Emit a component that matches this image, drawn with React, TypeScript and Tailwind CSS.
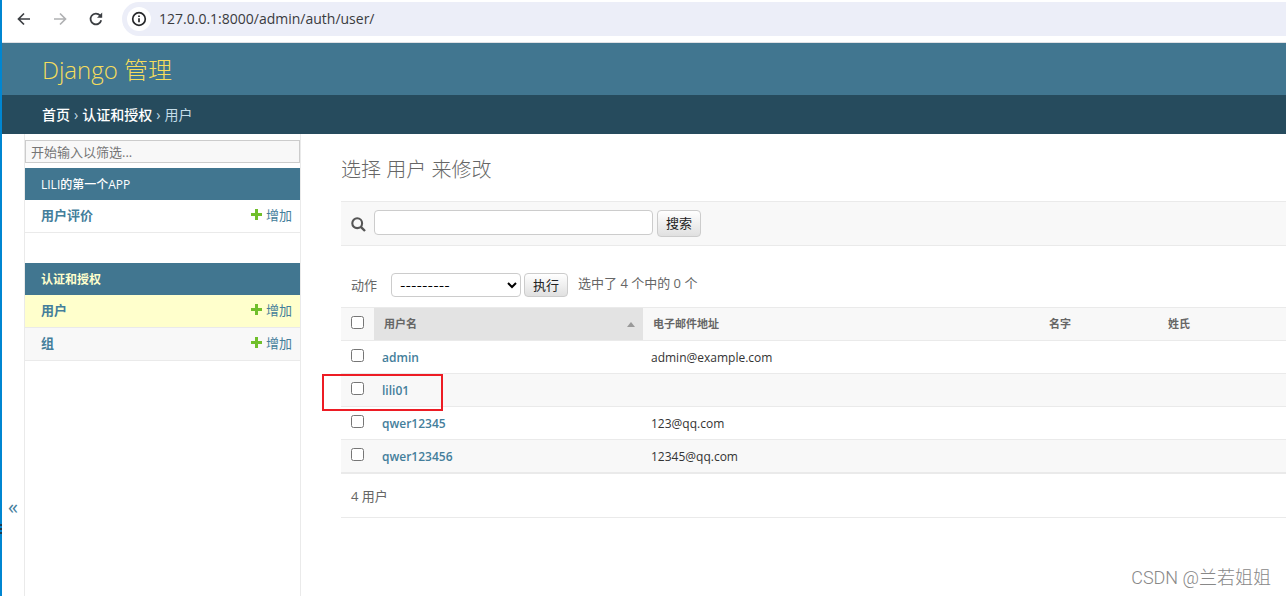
import React, { useState } from 'react';

interface User {
  username: string;
  email: string;
  marked?: boolean;
}

interface AppSection {
  label: string;
  current?: boolean;
  models: { name: string; current?: boolean; shaded?: boolean }[];
}

const users: User[] = [
  { username: 'admin', email: 'admin@example.com' },
  { username: 'lili01', email: '', marked: true },
  { username: 'qwer12345', email: '123@qq.com' },
  { username: 'qwer123456', email: '12345@qq.com' },
];

const sections: AppSection[] = [
  { label: 'LILI的第一个APP', models: [{ name: '用户评价' }] },
  {
    label: '认证和授权',
    current: true,
    models: [{ name: '用户', current: true }, { name: '组', shaded: true }],
  },
];

const buttonClass =
  'w-11 shrink-0 rounded-[4px] border border-[#ccc] bg-linear-to-b from-white to-[#e0e0e0] text-[13px] leading-none text-[#222]';
const checkboxClass = 'block size-[13px]';

function BrowserBar() {
  return (
    <div className="flex h-[43px] items-start border-b border-[#dfe1e5] bg-white">
      <div className="flex h-[38px] items-center gap-5 pr-[18px] pl-3.5 text-[#3c3f43]">
        <button type="button" aria-label="后退">
          <svg viewBox="0 0 16 16" className="size-4" fill="none" stroke="currentColor" strokeWidth="1.7">
            <path d="M14 8H3M8 2.5 2.5 8 8 13.5" />
          </svg>
        </button>
        <button type="button" aria-label="前进" className="text-[#b0b1b3]">
          <svg viewBox="0 0 16 16" className="size-4" fill="none" stroke="currentColor" strokeWidth="1.7">
            <path d="M2 8h11M8 2.5 13.5 8 8 13.5" />
          </svg>
        </button>
        <button type="button" aria-label="重新加载">
          <svg viewBox="0 0 16 16" className="size-4" fill="none" stroke="currentColor" strokeWidth="1.8">
            <path d="M13.2 9.2A5.4 5.4 0 1 1 12 4.4L13.4 6" />
            <path d="M14.2 1.6v5.2H9z" fill="currentColor" stroke="none" />
          </svg>
        </button>
      </div>
      <div className="mt-0.5 flex h-[34px] flex-1 items-center gap-2 rounded-l-full bg-[#eceef8] pl-[5px]">
        <span className="flex size-6 shrink-0 items-center justify-center rounded-full bg-white text-[#27282a]">
          <svg viewBox="0 0 16 16" className="size-4" fill="none" stroke="currentColor" strokeWidth="1.7">
            <circle cx="8" cy="8" r="6.3" />
            <path d="M8 7.2v4M8 4.4v1.6" />
          </svg>
        </span>
        <input
          aria-label="地址"
          defaultValue="127.0.0.1:8000/admin/auth/user/"
          className="min-w-0 flex-1 bg-transparent pb-0.5 text-[14px] text-[#3a3b3e] outline-none"
        />
      </div>
    </div>
  );
}

function Sidebar() {
  const [filter, setFilter] = useState('');

  return (
    <nav className="w-[277px] shrink-0 border-x border-[#eaeaea] pt-1.5">
      <input
        aria-label="筛选"
        placeholder="开始输入以筛选..."
        value={filter}
        onChange={e => setFilter(e.target.value)}
        className="mb-[5px] block h-[23px] w-full border border-[#ccc] bg-[#f8f8f8] px-[5px] text-[13px] placeholder:text-[#757575]"
      />
      {sections.map(section => (
        <section key={section.label} className="mb-[30px]">
          <h2
            className={`flex h-8 items-center bg-[#417690] px-4 pt-0.5 text-[12px] ${
              section.current ? 'font-bold text-[#ffc]' : 'font-medium text-white'
            }`}
          >
            <a href="#">{section.label}</a>
          </h2>
          {section.models
            .filter(model => model.name.includes(filter))
            .map(model => (
              <div
                key={model.name}
                className={`flex h-[33px] items-center justify-between border-b border-[#eaeaea] pr-2 pl-4 text-[13px] text-[#447e9b] ${
                  model.current ? 'bg-[#ffc]' : model.shaded ? 'bg-[#f8f8f8]' : 'bg-white'
                }`}
              >
                <a href="#" className="font-bold">{model.name}</a>
                <a href="#" className="flex items-center gap-1">
                  <svg viewBox="0 0 11 11" className="mb-1 size-[11px]" fill="#70bf2b">
                    <path d="M4 0h3v4h4v3H7v4H4V7H0V4h4z" />
                  </svg>
                  增加
                </a>
              </div>
            ))}
        </section>
      ))}
    </nav>
  );
}

function ResultsTable() {
  return (
    <table className="w-full table-fixed border-collapse text-left text-[12px]">
      <colgroup>
        <col className="w-[33px]" />
        <col className="w-[269px]" />
        <col className="w-[396px]" />
        <col className="w-[119px]" />
        <col />
      </colgroup>
      <thead>
        <tr className="h-[33px] border-y border-[#eaeaea] bg-[#f8f8f8] text-[11px] text-[#666]">
          <th className="pb-1 pl-2.5">
            <input type="checkbox" aria-label="全选" className={checkboxClass} />
          </th>
          <th className="bg-[#e3e3e3] pr-2 pl-2.5">
            <a href="#" className="flex items-center justify-between">
              用户名
              <svg viewBox="0 0 8 5" className="h-[5px] w-2" fill="#999">
                <path d="M4 0l4 5H0z" />
              </svg>
            </a>
          </th>
          <th className="pl-2.5">电子邮件地址</th>
          <th className="pl-2.5">名字</th>
          <th className="pl-2.5">姓氏</th>
        </tr>
      </thead>
      <tbody>
        {users.map(user => (
          <tr key={user.username} className="h-[33px] border-b border-[#eaeaea] even:bg-[#f8f8f8]">
            <td className="relative pb-1 pl-2.5">
              <input type="checkbox" aria-label={user.username} className={checkboxClass} />
              {user.marked && (
                <span className="pointer-events-none absolute top-0 -left-[19px] h-[37px] w-[121px] border-2 border-[#ed1c24]" />
              )}
            </td>
            <td className="pt-0.5 pl-2 font-semibold text-[#447e9b]">
              <a href="#">{user.username}</a>
            </td>
            <td className="pt-0.5 pl-2 text-[#333]">{user.email}</td>
            <td />
            <td />
          </tr>
        ))}
      </tbody>
    </table>
  );
}

function App() {
  return (
    <div className="relative flex min-h-screen bg-white font-['Open_Sans','Noto_Sans_CJK_SC',sans-serif]">
      <div className="flex w-0.5 shrink-0 flex-col justify-end gap-0.5 bg-[#0086d1] pb-[62px]">
        <span className="h-0.5 bg-[#1c3a50]" />
        <span className="h-0.5 bg-[#1c3a50]" />
        <span className="h-0.5 bg-[#1c3a50]" />
      </div>
      <div className="flex min-w-0 flex-1 flex-col overflow-hidden">
        <BrowserBar />
        <header className="flex h-[52px] items-center bg-[#417690] px-10 pt-0.5">
          <h1 className="text-[24px] font-light text-[#f5dd5d]">
            <a href="#">Django 管理</a>
          </h1>
        </header>
        <div className="flex h-[39px] items-center gap-1 bg-[#264b5d] px-10 text-[14px] text-[#c4dce8]">
          <a href="#" className="font-medium text-white">首页</a>
          <span>›</span>
          <a href="#" className="font-medium text-white">认证和授权</a>
          <span>›</span>
          <span>用户</span>
        </div>

        <div className="flex flex-1">
          <button
            type="button"
            aria-label="切换导航"
            className="flex w-[22px] shrink-0 items-end justify-center pb-[73px] text-[20px] leading-8 text-[#447e9b]"
          >
            «
          </button>
          <Sidebar />

          <main className="min-w-0 flex-1 pt-[21px] pl-10 text-[13px] text-[#666]">
            <h2 className="mb-4 text-[20px] leading-[30px] font-light">选择 用户 来修改</h2>

            <form
              className="flex h-[45px] items-start border-y border-[#eaeaea] bg-[#f8f8f8] pt-2 pl-2.5"
              onSubmit={e => e.preventDefault()}
            >
              <label htmlFor="searchbar" aria-label="搜索" className="mt-[7px] mr-2 text-[#555]">
                <svg viewBox="0 0 15 15" className="size-[15px]" fill="none" stroke="currentColor">
                  <circle cx="6.2" cy="6.2" r="4.9" strokeWidth="2.1" />
                  <path d="M9.8 9.8l4.2 4.2" strokeWidth="2.4" />
                </svg>
              </label>
              <input
                id="searchbar"
                type="text"
                className="mr-1 h-[25px] w-[279px] rounded-[4px] border border-[#ccc] bg-white px-1.5"
              />
              <button type="submit" className={`h-[27px] ${buttonClass}`}>搜索</button>
            </form>

            <div className="flex h-[61px] items-end pb-2.5 pl-2.5">
              <label htmlFor="action" className="mr-3.5 leading-6">动作</label>
              <select
                id="action"
                className="mr-[3px] h-6 w-[130px] rounded-[4px] border border-[#ccc] bg-white pl-1 font-['Inter','Noto_Sans_CJK_SC',sans-serif] text-[12px] text-black"
              >
                <option>---------</option>
                <option>删除所选的 用户</option>
              </select>
              <button type="button" className={`h-6 ${buttonClass}`}>执行</button>
              <span className="ml-2.5 pb-1 leading-5">选中了 4 个中的 0 个</span>
            </div>

            <ResultsTable />
            <p className="flex h-[45px] items-center border-y border-[#eaeaea] pt-0.5 pl-2.5">4 用户</p>
          </main>
        </div>
      </div>
      <span className="absolute right-[15px] bottom-1.5 font-['Roboto','Noto_Sans_CJK_SC',sans-serif] text-[18px] leading-6 font-light text-[#888]">
        CSDN @兰若姐姐
      </span>
    </div>
  );
}

export default App;
